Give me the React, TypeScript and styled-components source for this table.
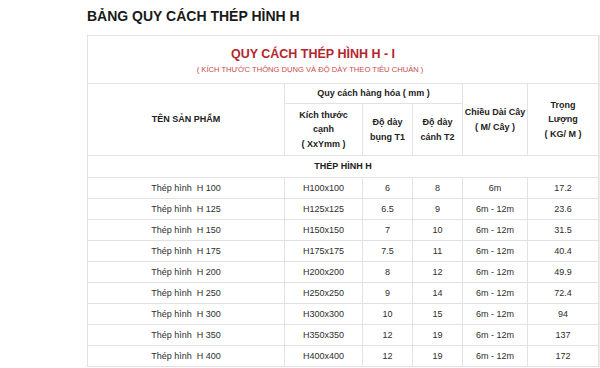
import React from "react";
import styled, { createGlobalStyle } from "styled-components";

const Global = createGlobalStyle`
  html, body { margin: 0; padding: 0; background: #fff; }
  body { font-family: "Liberation Sans", Arial, sans-serif; color: #222; }
`;

const Page = styled.div`
  padding: 6px 0 0 87px;
  width: 600px;
  height: 368px;
  box-sizing: border-box;
  overflow: hidden;
`;

const Heading = styled.h2`
  margin: 0 0 9px;
  font-size: 14px;
  line-height: 20px;
  font-weight: bold;
  color: #1a1a1a;
`;

const TableWrap = styled.div`
  width: 513px;
  border-right: 2px solid #ececec;
  box-sizing: border-box;
`;

const Table = styled.table`
  border-collapse: collapse;
  table-layout: fixed;
  width: 511px;
  font-size: 9px;
  color: #2e2e2e;
`;

const Cell = styled.td<{ $h?: number; $bold?: boolean }>`
  border: 1px solid #e2e2e2;
  padding: 0;
  text-align: center;
  vertical-align: middle;
  height: ${(p) => (p.$h ? `${p.$h - 1}px` : "20px")};
  font-weight: ${(p) => (p.$bold ? "bold" : "normal")};
  color: ${(p) => (p.$bold ? "#222" : "#2e2e2e")};
  line-height: 14.5px;
  white-space: nowrap;
`;

const TitleCell = styled.td`
  border: 1px solid #e2e2e2;
  height: 47px;
  padding: 0 66px 0 0;
  text-align: center;
  vertical-align: middle;
`;

const RedTitle = styled.div`
  color: #b3262c;
  font-weight: bold;
  font-size: 12.5px;
  line-height: 16px;
  padding-left: 6px;
  margin-top: 2px;
`;

const RedSub = styled.div`
  color: #c9484d;
  font-size: 7.6px;
  line-height: 10px;
  margin-top: 3px;
`;

const rows: [string, string, string, string, string, string][] = [
  ["Thép hình\u00a0 H 100", "H100x100", "6", "8", "6m", "17.2"],
  ["Thép hình\u00a0 H 125", "H125x125", "6.5", "9", "6m - 12m", "23.6"],
  ["Thép hình\u00a0 H 150", "H150x150", "7", "10", "6m - 12m", "31.5"],
  ["Thép hình\u00a0 H 175", "H175x175", "7.5", "11", "6m - 12m", "40.4"],
  ["Thép hình\u00a0 H 200", "H200x200", "8", "12", "6m - 12m", "49.9"],
  ["Thép hình\u00a0 H 250", "H250x250", "9", "14", "6m - 12m", "72.4"],
  ["Thép hình\u00a0 H 300", "H300x300", "10", "15", "6m - 12m", "94"],
  ["Thép hình\u00a0 H 350", "H350x350", "12", "19", "6m - 12m", "137"],
  ["Thép hình\u00a0 H 400", "H400x400", "12", "19", "6m - 12m", "172"],
];

export default function App() {
  return (
    <>
      <Global />
      <Page>
        <Heading>BẢNG QUY CÁCH THÉP HÌNH H</Heading>
        <TableWrap>
          <Table>
            <colgroup>
              <col style={{ width: 197 }} />
              <col style={{ width: 78 }} />
              <col style={{ width: 50 }} />
              <col style={{ width: 50 }} />
              <col style={{ width: 65 }} />
              <col style={{ width: 71 }} />
            </colgroup>
            <tbody>
              <tr>
                <TitleCell colSpan={6}>
                  <RedTitle>QUY CÁCH THÉP HÌNH H - I</RedTitle>
                  <RedSub>( KÍCH THƯỚC THÔNG DỤNG VÀ ĐỘ DÀY THEO TIÊU CHUẨN )</RedSub>
                </TitleCell>
              </tr>
              <tr>
                <Cell rowSpan={2} $bold>TÊN SẢN PHẨM</Cell>
                <Cell colSpan={3} $bold $h={20}>Quy cách hàng hóa ( mm )</Cell>
                <Cell rowSpan={2} $bold>
                  Chiều Dài Cây
                  <br />( M/ Cây )
                </Cell>
                <Cell rowSpan={2} $bold>
                  Trọng
                  <br />
                  Lượng
                  <br />( KG/ M )
                </Cell>
              </tr>
              <tr>
                <Cell $bold $h={52}>
                  Kích thước
                  <br />
                  cạnh
                  <br />( XxYmm )
                </Cell>
                <Cell $bold $h={52}>
                  Độ dày
                  <br />
                  bụng T1
                </Cell>
                <Cell $bold $h={52}>
                  Độ dày
                  <br />
                  cánh T2
                </Cell>
              </tr>
              <tr>
                <Cell colSpan={6} $bold $h={22}>THÉP HÌNH H</Cell>
              </tr>
              {rows.map((r) => (
                <tr key={r[0]}>
                  {r.map((c, i) => (
                    <Cell key={i} $h={21}>{c}</Cell>
                  ))}
                </tr>
              ))}
            </tbody>
          </Table>
        </TableWrap>
      </Page>
    </>
  );
}
